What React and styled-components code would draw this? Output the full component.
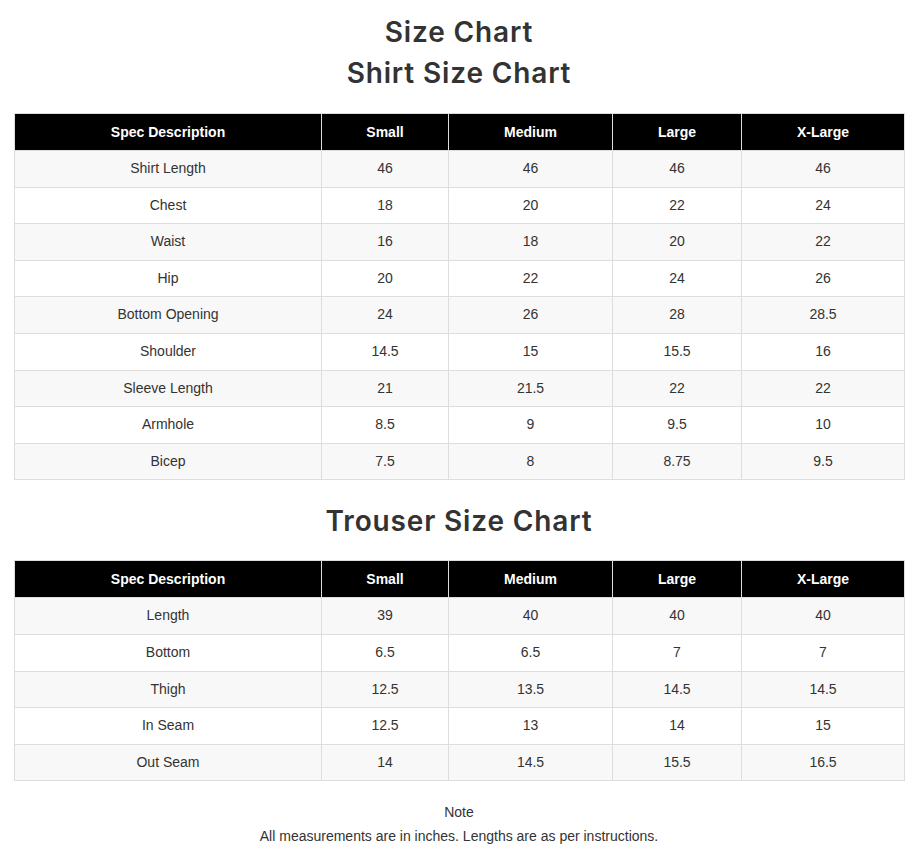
import React from "react";
import styled, { createGlobalStyle } from "styled-components";

const Global = createGlobalStyle`
  html, body { margin: 0; padding: 0; background: #fff; }
  body { font-family: "Liberation Sans", Arial, sans-serif; color: #333; }
`;

const Page = styled.div`
  padding: 12px 15px 12px 14px;
  display: flex;
  flex-direction: column;
  align-items: stretch;
`;

const Heading = styled.h2`
  margin: 0;
  font-family: Inter, "Noto Sans", sans-serif;
  font-weight: 600;
  font-size: 28px;
  line-height: 41px;
  text-align: center;
  color: #333;
  letter-spacing: 0.85px;
`;

const HeadingBlock = styled.div`
  margin: ${(p) => p.$top || 0}px 0 ${(p) => p.$bottom || 0}px;
`;

const Table = styled.table`
  width: 100%;
  border-collapse: collapse;
  table-layout: fixed;
  border: 1px solid #ddd;
  font-size: 14px;
`;

const Th = styled.th`
  background: #000;
  color: #fff;
  font-weight: bold;
  font-size: 14px;
  border: 1px solid #ddd;
  padding: 10px 8px;
  line-height: 16px;
  text-align: center;
`;

const Tr = styled.tr`
  background: ${(p) => (p.$striped ? "#f8f8f8" : "#fff")};
`;

const Td = styled.td`
  border: 1px solid #ddd;
  padding: 10px 8px;
  line-height: 15.6px;
  text-align: center;
  color: #333;
`;

const Note = styled.div`
  margin-top: 19px;
  text-align: center;
  font-size: 14px;
  line-height: 24px;
  color: #333;
`;

const cols = [307, 127, 164, 129, 163];

const shirt = [
  ["Shirt Length", "46", "46", "46", "46"],
  ["Chest", "18", "20", "22", "24"],
  ["Waist", "16", "18", "20", "22"],
  ["Hip", "20", "22", "24", "26"],
  ["Bottom Opening", "24", "26", "28", "28.5"],
  ["Shoulder", "14.5", "15", "15.5", "16"],
  ["Sleeve Length", "21", "21.5", "22", "22"],
  ["Armhole", "8.5", "9", "9.5", "10"],
  ["Bicep", "7.5", "8", "8.75", "9.5"],
];

const trouser = [
  ["Length", "39", "40", "40", "40"],
  ["Bottom", "6.5", "6.5", "7", "7"],
  ["Thigh", "12.5", "13.5", "14.5", "14.5"],
  ["In Seam", "12.5", "13", "14", "15"],
  ["Out Seam", "14", "14.5", "15.5", "16.5"],
];

const headers = ["Spec Description", "Small", "Medium", "Large", "X-Large"];

function SizeTable({ rows }) {
  return (
    <Table>
      <colgroup>
        {cols.map((w, i) => (
          <col key={i} style={{ width: w }} />
        ))}
      </colgroup>
      <thead>
        <tr>
          {headers.map((h) => (
            <Th key={h}>{h}</Th>
          ))}
        </tr>
      </thead>
      <tbody>
        {rows.map((r, i) => (
          <Tr key={i} $striped={i % 2 === 0}>
            {r.map((c, j) => (
              <Td key={j}>{c}</Td>
            ))}
          </Tr>
        ))}
      </tbody>
    </Table>
  );
}

export default function App() {
  return (
    <>
      <Global />
      <Page>
        <HeadingBlock $bottom={19}>
          <Heading>Size Chart</Heading>
          <Heading>Shirt Size Chart</Heading>
        </HeadingBlock>
        <SizeTable rows={shirt} />
        <HeadingBlock $top={21} $bottom={18}>
          <Heading>Trouser Size Chart</Heading>
        </HeadingBlock>
        <SizeTable rows={trouser} />
        <Note>
          Note
          <br />
          All measurements are in inches. Lengths are as per instructions.
        </Note>
      </Page>
    </>
  );
}
